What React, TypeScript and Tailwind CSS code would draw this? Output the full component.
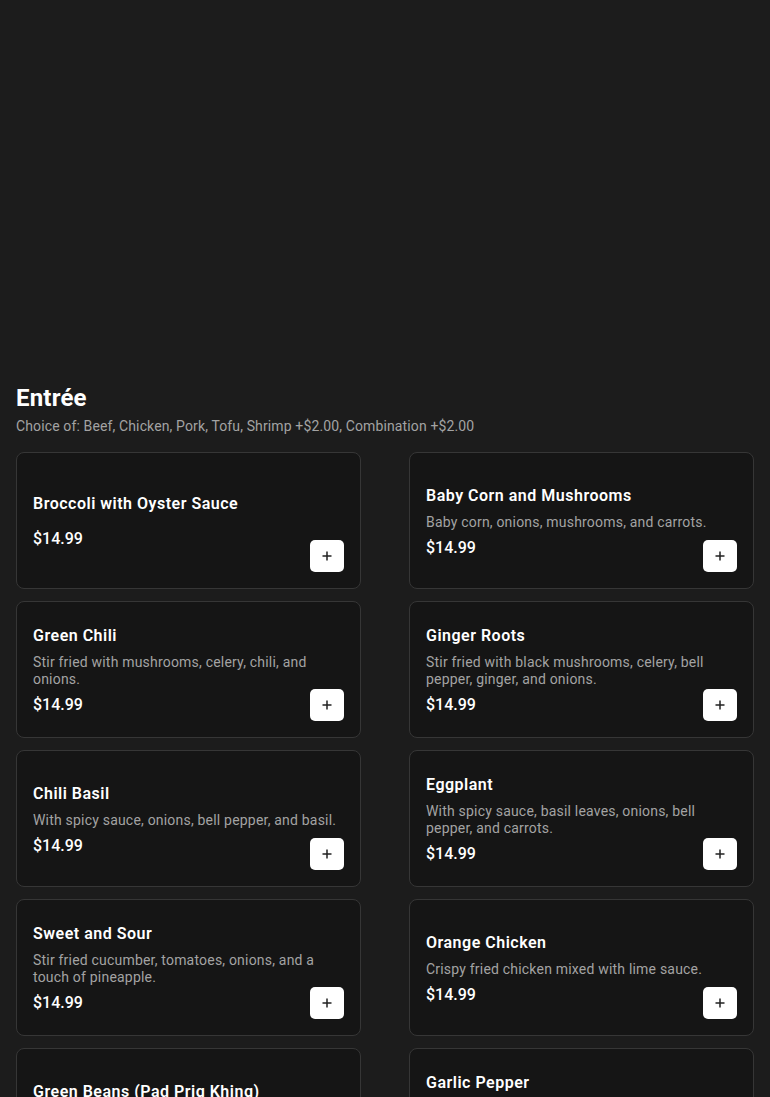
import React from "react";

type Item = { name: string; desc?: string; price: string };

const items: Item[] = [
  { name: "Broccoli with Oyster Sauce", price: "$14.99" },
  { name: "Baby Corn and Mushrooms", desc: "Baby corn, onions, mushrooms, and carrots.", price: "$14.99" },
  { name: "Green Chili", desc: "Stir fried with mushrooms, celery, chili, and onions.", price: "$14.99" },
  { name: "Ginger Roots", desc: "Stir fried with black mushrooms, celery, bell pepper, ginger, and onions.", price: "$14.99" },
  { name: "Chili Basil", desc: "With spicy sauce, onions, bell pepper, and basil.", price: "$14.99" },
  { name: "Eggplant", desc: "With spicy sauce, basil leaves, onions, bell pepper, and carrots.", price: "$14.99" },
  { name: "Sweet and Sour", desc: "Stir fried cucumber, tomatoes, onions, and a touch of pineapple.", price: "$14.99" },
  { name: "Orange Chicken", desc: "Crispy fried chicken mixed with lime sauce.", price: "$14.99" },
  { name: "Green Beans (Pad Prig Khing)", desc: "Green beans and bell pepper in prig khing sauce.", price: "$14.99" },
  { name: "Garlic Pepper", desc: "Sautéed with garlic and black pepper sauce, served on steamed vegetables.", price: "$14.99" },
];

function Card({ item }: { item: Item }) {
  return (
    <div className="grid min-h-[137px] rounded-lg border border-[#363636] bg-[#151515] p-4">
      <div className="col-start-1 row-start-1 flex flex-col justify-center gap-[5px] pt-[2px]">
        <h3 className="mb-[1px] text-[16px] font-semibold leading-6 tracking-[0.5px] text-white">{item.name}</h3>
        {item.desc ? (
          <p className="text-[14px] leading-[17px] tracking-[0.2px] text-[#a3a3a3]">{item.desc}</p>
        ) : (
          <div className="h-0" />
        )}
        <div className="text-[16px] font-medium leading-6 text-white">{item.price}</div>
      </div>
      <button className="col-start-1 row-start-1 flex h-8 w-[34px] items-center justify-center self-end justify-self-end rounded-[5px] bg-white">
        <svg width="10" height="10" viewBox="0 0 10 10" fill="none">
          <path d="M5 0.5V9.5M0.5 5H9.5" stroke="#222" strokeWidth="1.5" />
        </svg>
      </button>
    </div>
  );
}

export default function App() {
  return (
    <div
      className="min-h-[1097px] bg-[#1c1c1c] px-4"
      style={{ fontFamily: "Roboto, 'Noto Sans', sans-serif" }}
    >
      <div className="h-[382px]" />
      <h2 className="text-[24px] font-bold leading-8 tracking-[0.2px] text-white">Entrée</h2>
      <p className="mt-0.5 text-[14px] leading-5 tracking-[0.13px] text-[#a3a3a3]">
        Choice of: Beef, Chicken, Pork, Tofu, Shrimp +$2.00, Combination +$2.00
      </p>
      <div className="mt-4 grid grid-cols-2 gap-x-12 gap-y-3 pb-8">
        {items.map((it) => (
          <Card key={it.name} item={it} />
        ))}
      </div>
    </div>
  );
}
